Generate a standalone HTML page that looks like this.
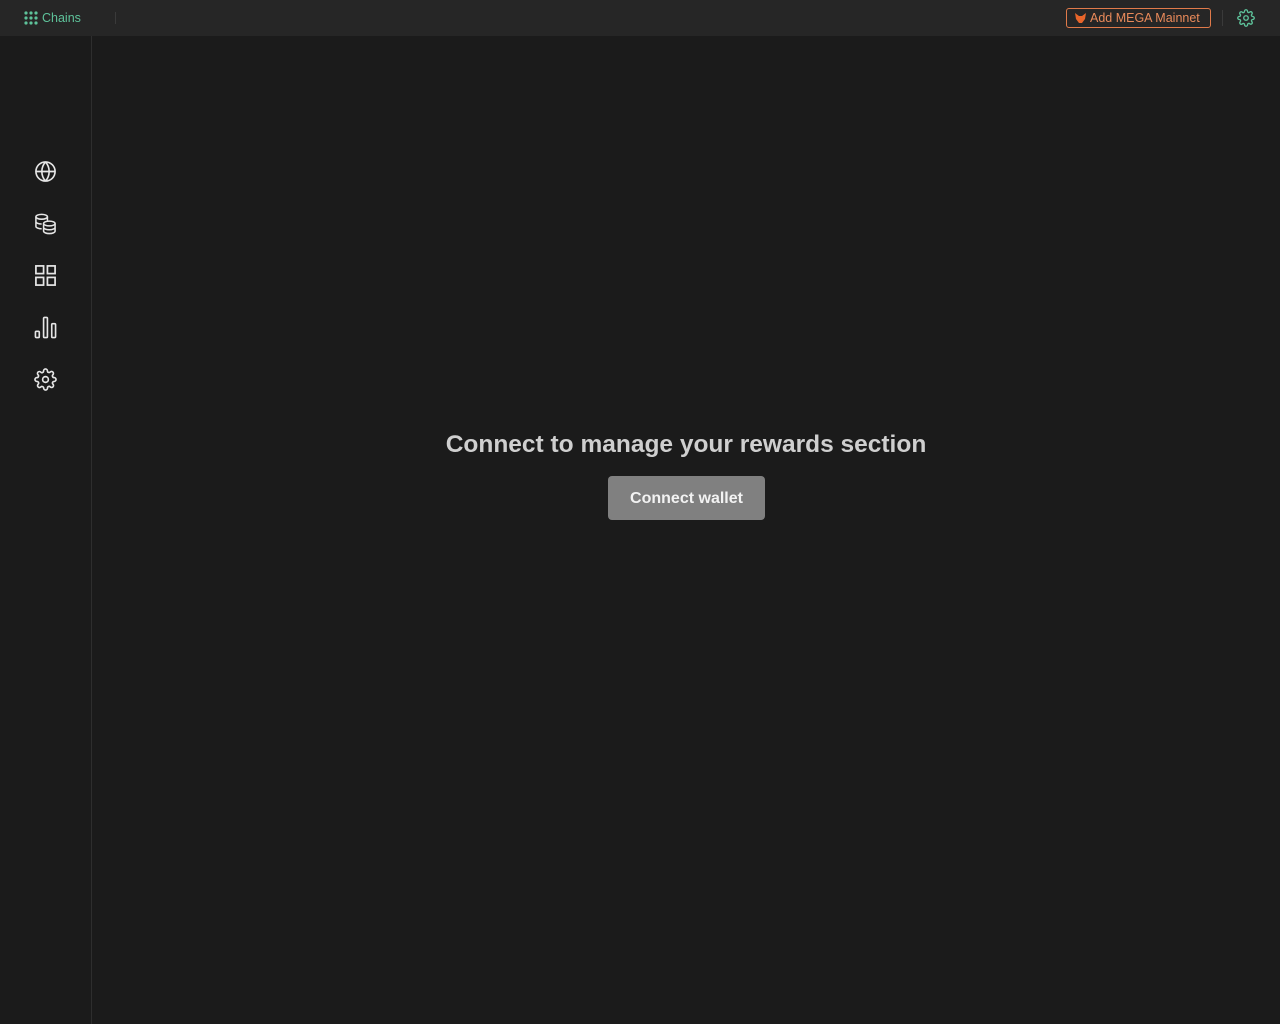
<!DOCTYPE html>
<html><head><meta charset="utf-8"><style>
*{margin:0;padding:0;box-sizing:border-box}
body{width:1280px;height:1024px;background:#1b1b1b;font-family:"Liberation Sans",sans-serif;overflow:hidden;position:relative}
.top{position:absolute;left:0;top:0;width:1280px;height:36px;background:#262626}
.chains{position:absolute;left:24px;top:11px;color:#5ec29a;font-size:12.5px;display:flex;align-items:center;gap:4px}
.vsep{position:absolute;width:1px;background:#3a3a3a}
.add{position:absolute;left:1066px;top:8px;width:145px;height:20px;border:1px solid #e07a4a;border-radius:3px;color:#e98a5a;font-size:12.5px;display:flex;align-items:center;padding-left:8px;gap:4px}
.side{position:absolute;left:0;top:36px;width:92px;height:988px;border-right:1px solid #2e2e2e}
.ic{position:absolute;left:34px}
h1{position:absolute;left:0;width:1372px;top:431px;text-align:center;color:#cfcfcf;font-size:24.5px;font-weight:bold}
.btn{position:absolute;left:608px;top:476px;width:157px;height:44px;background:#808080;border-radius:4px;color:#f2f2f2;font-weight:bold;font-size:16px;display:flex;align-items:center;justify-content:center;padding-top:2px}
</style></head><body>
<div class="top">
<div class="chains"><svg width="14" height="14" viewBox="0 0 14 14" fill="#5ec29a"><circle cx="2" cy="2" r="1.6"/><circle cx="7" cy="2" r="1.6"/><circle cx="12" cy="2" r="1.6"/><circle cx="2" cy="7" r="1.6"/><circle cx="7" cy="7" r="1.6"/><circle cx="12" cy="7" r="1.6"/><circle cx="2" cy="12" r="1.6"/><circle cx="7" cy="12" r="1.6"/><circle cx="12" cy="12" r="1.6"/></svg>Chains</div>
<div class="vsep" style="left:115px;top:12px;height:12px"></div>
<div class="add"><svg width="11" height="10" viewBox="0 0 11 10"><path d="M0 0L4 3H7L11 0L10 6L7 10H4L1 6Z" fill="#e8652a"/></svg>Add MEGA Mainnet</div>
<div class="vsep" style="left:1222px;top:10px;height:16px"></div>
<svg style="position:absolute;left:1237px;top:9px" width="18" height="18" viewBox="0 0 24 24" fill="none" stroke="#5ec29a" stroke-width="1.8"><circle cx="12" cy="12" r="3"/><path d="M19.4 15a1.650 1.650 0 0 0 .33 1.82l.06.06a2 2 0 1 1-2.830 2.83l-.06-.06a1.65 1.65 0 0 0-1.82-.33 1.65 1.65 0 0 0-1 1.51V21a2 2 0 0 1-4 0v-.09A1.65 1.65 0 0 0 9 19.4a1.65 1.65 0 0 0-1.82.33l-.06.06a2 2 0 1 1-2.83-2.83l.06-.06A1.65 1.65 0 0 0 4.68 15a1.65 1.65 0 0 0-1.51-1H3a2 2 0 0 1 0-4h.09A1.65 1.65 0 0 0 4.6 9a1.65 1.65 0 0 0-.33-1.82l-.06-.06a2 2 0 1 1 2.83-2.83l.06.06A1.65 1.65 0 0 0 9 4.68a1.65 1.65 0 0 0 1-1.51V3a2 2 0 0 1 4 0v.09a1.65 1.65 0 0 0 1 1.51 1.65 1.65 0 0 0 1.82-.33l.06-.06a2 2 0 1 1 2.83 2.83l-.06.06A1.65 1.65 0 0 0 19.4 9a1.65 1.65 0 0 0 1.51 1H21a2 2 0 0 1 0 4h-.09a1.65 1.65 0 0 0-1.51 1z"/></svg>
</div>
<div class="side"></div>
<svg class="ic" style="top:160px" width="23" height="23" viewBox="0 0 24 24" fill="none" stroke="#e6e6e6" stroke-width="1.7"><circle cx="12" cy="12" r="10"/><path d="M2 12h20M12 2a15 15 0 0 1 0 20M12 2a15 15 0 0 0 0 20"/></svg>
<svg class="ic" style="top:212px" width="23" height="23" viewBox="0 0 24 24" fill="none" stroke="#e6e6e6" stroke-width="1.6"><ellipse cx="8" cy="5" rx="6" ry="2.5"/><path d="M2 5v10c0 1.4 2.7 2.5 6 2.5M2 10c0 1.4 2.7 2.5 6 2.5M14 5v4"/><ellipse cx="16" cy="12" rx="6" ry="2.5"/><path d="M10 12v8c0 1.4 2.7 2.5 6 2.5s6-1.1 6-2.5v-8M10 16c0 1.4 2.7 2.5 6 2.5s6-1.1 6-2.5"/></svg>
<svg class="ic" style="top:264px" width="23" height="23" viewBox="0 0 24 24" fill="none" stroke="#e6e6e6" stroke-width="1.8"><rect x="2" y="2" width="8" height="8"/><rect x="14" y="2" width="8" height="8"/><rect x="2" y="14" width="8" height="8"/><rect x="14" y="14" width="8" height="8"/></svg>
<svg class="ic" style="top:316px" width="23" height="23" viewBox="0 0 24 24" fill="none" stroke="#e6e6e6" stroke-width="1.7"><rect x="1.5" y="16" width="4" height="6.5" rx="1"/><rect x="10" y="1.5" width="4" height="21" rx="1"/><rect x="18.5" y="8" width="4" height="14.5" rx="1"/></svg>
<svg class="ic" style="top:368px" width="23" height="23" viewBox="0 0 24 24" fill="none" stroke="#e6e6e6" stroke-width="1.7"><circle cx="12" cy="12" r="3"/><path d="M19.4 15a1.65 1.65 0 0 0 .33 1.82l.06.06a2 2 0 1 1-2.83 2.83l-.06-.06a1.65 1.65 0 0 0-1.82-.33 1.65 1.65 0 0 0-1 1.51V21a2 2 0 0 1-4 0v-.09A1.65 1.65 0 0 0 9 19.4a1.65 1.65 0 0 0-1.82.33l-.06.06a2 2 0 1 1-2.83-2.83l.06-.06A1.65 1.65 0 0 0 4.68 15a1.65 1.65 0 0 0-1.51-1H3a2 2 0 0 1 0-4h.09A1.65 1.65 0 0 0 4.6 9a1.65 1.65 0 0 0-.33-1.82l-.06-.06a2 2 0 1 1 2.83-2.83l.06.06A1.65 1.65 0 0 0 9 4.68a1.65 1.65 0 0 0 1-1.51V3a2 2 0 0 1 4 0v.09a1.65 1.65 0 0 0 1 1.51 1.65 1.65 0 0 0 1.82-.33l.06-.06a2 2 0 1 1 2.83 2.83l-.06.06A1.65 1.65 0 0 0 19.4 9a1.65 1.65 0 0 0 1.51 1H21a2 2 0 0 1 0 4h-.09a1.65 1.65 0 0 0-1.51 1z"/></svg>
<h1>Connect to manage your rewards section</h1>
<div class="btn">Connect wallet</div>
</body></html>
